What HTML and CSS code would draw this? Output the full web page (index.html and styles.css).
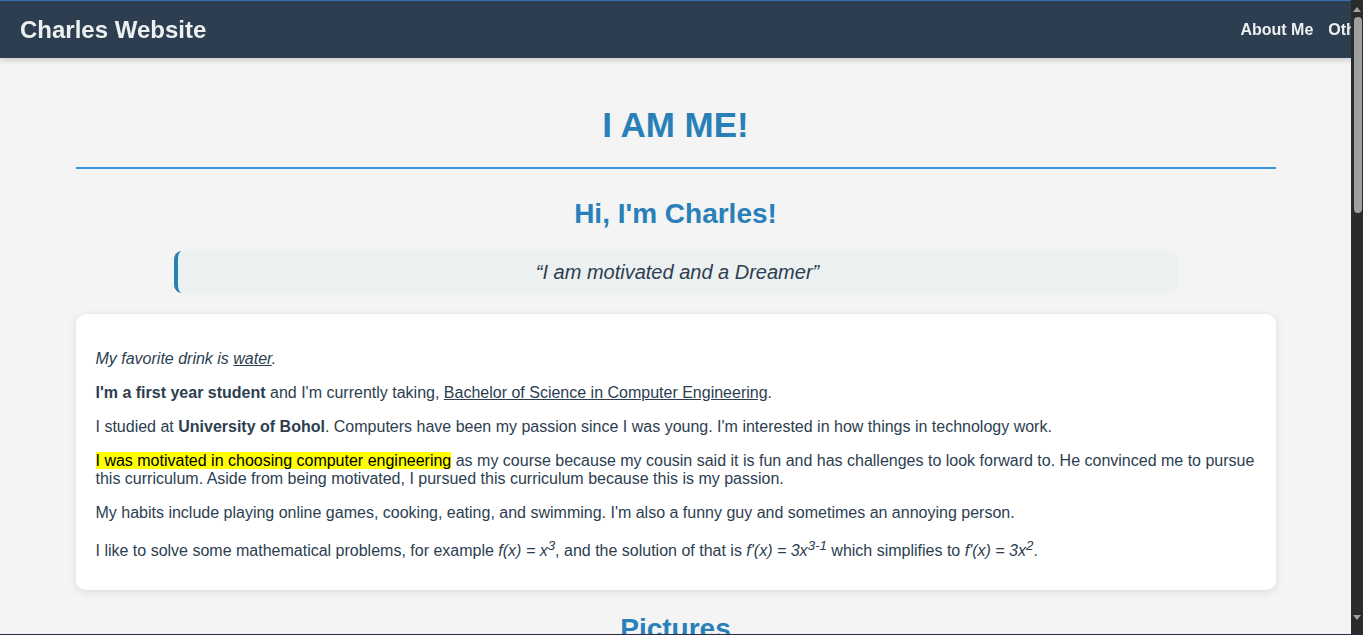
FILE: index.html
```html
<!DOCTYPE html>
<html lang="en">
<head>
<meta charset="utf-8">
<title>Charles Website</title>
<link rel="stylesheet" href="styles.css">
</head>
<body>
<header class="site-header">
  <div class="logo">Charles Website</div>
  <nav class="nav">
    <a href="#about">About Me</a>
    <a href="#other">Other</a>
  </nav>
</header>

<main class="container">
  <h1 class="page-title">I AM ME!</h1>

  <section class="intro" id="about">
    <h2 class="section-title">Hi, I'm Charles!</h2>
    <blockquote class="quote">“I am motivated and a Dreamer”</blockquote>

    <div class="card">
      <p><em>My favorite drink is <a href="#">water</a>.</em></p>
      <p><strong>I'm a first year student</strong> and I'm currently taking, <a href="#">Bachelor of Science in Computer Engineering</a>.</p>
      <p>I studied at <strong>University of Bohol</strong>. Computers have been my passion since I was young. I'm interested in how things in technology work.</p>
      <p><mark>I was motivated in choosing computer engineering</mark> as my course because my cousin said it is fun and has challenges to look forward to. He convinced me to pursue this curriculum. Aside from being motivated, I pursued this curriculum because this is my passion.</p>
      <p>My habits include playing online games, cooking, eating, and swimming. I'm also a funny guy and sometimes an annoying person.</p>
      <p>I like to solve some mathematical problems, for example <i>f(x) = x<sup>3</sup></i>, and the solution of that is <i>f'(x) = 3x<sup>3-1</sup></i> which simplifies to <i>f'(x) = 3x<sup>2</sup></i>.</p>
    </div>
  </section>

  <section class="pictures" id="other">
    <h2 class="section-title">Pictures</h2>
    <div class="gallery"></div>
  </section>
</main>

<div class="scrollbar" aria-hidden="true">
  <span class="sb-arrow sb-up"></span>
  <span class="sb-thumb"></span>
  <span class="sb-space"></span>
  <span class="sb-arrow sb-down"></span>
</div>
<div class="window-edge"></div>
</body>
</html>
```

FILE: styles.css
```css
html {
  background: #f4f4f4;
}

body {
  margin: 0 12px 0 0;
  padding-top: 58px;
  background: #f4f4f4;
  font-family: "Liberation Sans", Arial, sans-serif;
  font-size: 16px;
  color: #2c3e50;
}

/* header */
.site-header {
  position: fixed;
  top: 0;
  left: 0;
  z-index: 10;
  width: calc(100% - 12px);
  height: 57px;
  padding: 0 20px;
  border-top: 1px solid #3b6db4;
  display: flex;
  align-items: center;
  justify-content: space-between;
  background: #2c3e50;
  box-shadow: 0 2px 6px rgba(0, 0, 0, 0.18);
}

.logo {
  font-size: 24px;
  font-weight: bold;
  color: #ecf0f1;
  white-space: nowrap;
}

.nav {
  display: flex;
  white-space: nowrap;
}

.nav a {
  margin-left: 15px;
  font-size: 16px;
  font-weight: bold;
  color: #ecf0f1;
  text-decoration: none;
}

/* content */
.container {
  max-width: 1200px;
  margin: 0 auto;
  padding-top: 47px;
}

.page-title {
  margin: 0;
  padding-bottom: 22px;
  border-bottom: 2px solid #3498db;
  text-align: center;
  font-size: 35px;
  color: #2980b9;
}

.section-title {
  margin: 29px 0 0;
  text-align: center;
  font-size: 28px;
  color: #2980b9;
}

.quote {
  box-sizing: border-box;
  max-width: 1004px;
  margin: 21px auto;
  padding: 10px 20px;
  line-height: 22px;
  border-left: 4px solid #2980b9;
  border-radius: 8px;
  background: #ecf0f1;
  text-align: center;
  font-size: 20px;
  font-style: italic;
  color: #2c3e50;
}

.card {
  padding: 20px 20px 14px;
  border-radius: 10px;
  background: #fff;
  box-shadow: 0 2px 8px rgba(0, 0, 0, 0.1);
}

.card p {
  margin: 16px 0;
}

.card a {
  color: #2c3e50;
  text-decoration: underline;
}

.card mark {
  background: #ffff00;
  color: #000;
}

.pictures .section-title {
  margin-top: 23px;
}

.gallery {
  height: 1250px;
}

/* window chrome */
.scrollbar {
  position: fixed;
  top: 0;
  right: 0;
  bottom: 0;
  z-index: 20;
  width: 12px;
  padding: 7px 0 15px;
  box-sizing: border-box;
  display: flex;
  flex-direction: column;
  background: #2b2b2b;
}

.sb-arrow {
  width: 0;
  height: 0;
  margin: 0 auto;
  border-left: 4px solid transparent;
  border-right: 4px solid transparent;
}

.sb-up {
  border-bottom: 5px solid #a3a3a3;
}

.sb-down {
  border-top: 5px solid #a3a3a3;
}

.sb-thumb {
  width: 8px;
  height: 196px;
  margin: 5px 0 0 3px;
  border-radius: 4px;
  background: #9f9f9f;
}

.sb-space {
  flex: 1;
}

.window-edge {
  position: fixed;
  left: 0;
  right: 0;
  bottom: 0;
  z-index: 30;
  height: 1px;
  background: #2e2a47;
}
```
